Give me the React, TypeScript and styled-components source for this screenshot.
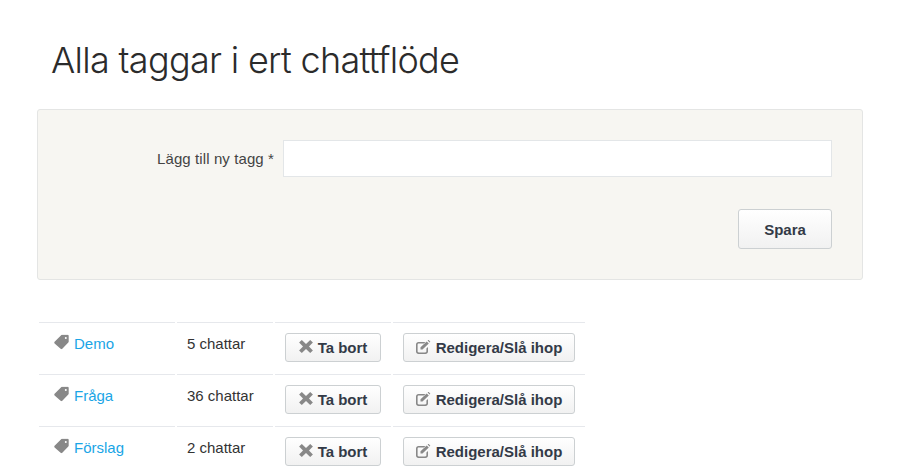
import React from "react";
import styled, { createGlobalStyle } from "styled-components";

const GlobalStyle = createGlobalStyle`
  html, body {
    margin: 0;
    padding: 0;
    background: #fff;
    overflow: hidden;
  }
  body {
    font-family: "Liberation Sans", Arial, sans-serif;
    font-size: 15px;
    color: #333;
  }
`;

const Page = styled.div`
  width: 897px;
  height: 473px;
  padding: 0 34px 0 37px;
  box-sizing: border-box;
  overflow: hidden;
`;

const Title = styled.h1`
  margin: 0;
  padding: 38px 0 0 14px;
  height: 109px;
  box-sizing: border-box;
  font-family: Inter, "Liberation Sans", sans-serif;
  font-size: 36px;
  line-height: 44px;
  font-weight: 300;
  letter-spacing: -0.68px;
  color: #2b2b2b;
`;

const Panel = styled.form`
  height: 171px;
  box-sizing: border-box;
  background: #f7f6f2;
  border: 1px solid #e4e5e4;
  border-radius: 3px;
  padding: 30px 30px 0 0;
`;

const FieldRow = styled.div`
  display: flex;
  align-items: center;
  justify-content: flex-end;
  gap: 9px;
`;

const FieldLabel = styled.label`
  font-size: 15px;
  letter-spacing: 0.1px;
  color: #444;
`;

const TextInput = styled.input`
  width: 549px;
  height: 37px;
  box-sizing: border-box;
  background: #fff;
  border: 1px solid #e3e6e8;
  outline: none;
`;

const FormActions = styled.div`
  display: flex;
  justify-content: flex-end;
  margin-top: 32px;
`;

const Button = styled.button<{ $large?: boolean }>`
  display: inline-flex;
  align-items: center;
  justify-content: center;
  gap: 5px;
  box-sizing: border-box;
  height: ${({ $large }) => ($large ? "40px" : "29px")};
  padding: 0;
  width: ${({ $large }) => ($large ? "94px" : "auto")};
  font-family: "Liberation Sans", Arial, sans-serif;
  font-size: 15px;
  font-weight: 700;
  color: #333a47;
  background: linear-gradient(#ffffff, #f1f1f1);
  border: 1px solid #ccd0d2;
  border-radius: 3px;
`;

const TagTable = styled.table`
  margin-top: 40px;
  border-collapse: separate;
  border-spacing: 2px;
`;

const Cell = styled.td<{ $width: number; $pad: number }>`
  width: ${({ $width }) => $width}px;
  height: 50px;
  box-sizing: border-box;
  padding: 0 0 0 ${({ $pad }) => $pad}px;
  border-top: 1px solid #e6e8ec;
  vertical-align: top;
`;

const NameWrap = styled.div`
  display: flex;
  align-items: center;
  gap: 5px;
  margin-top: 12px;
  font-size: 15px;
`;

const CountText = styled.div`
  margin-top: 12px;
  font-size: 15px;
  color: #333;
`;

const TagLink = styled.a`
  color: #1aa5e6;
  text-decoration: none;
`;

const Icon = styled.svg`
  flex: none;
  fill: #888;
`;

const TagSvg = styled(Icon)`
  transform: translateY(-1.5px);
`;

const RaisedIcon = styled(Icon)`
  transform: translateY(-1px);
`;

const TagIcon = () => (
  <TagSvg width="15" height="15" viewBox="0 0 15 15">
    <path
      fillRule="evenodd"
      d="M8 .3h5.500c.7 0 1.200.5 1.200 1.200V7c0 .4-.1.7-.4 1l-6 6.300c-.5.5-1.200.5-1.700 0L.6 8.900c-.5-.5-.5-1.200 0-1.700l6.300-6.300c.3-.3.700-.6 1.100-.6zM11.800 2.500a1 1 0 1 0 0 2 1 1 0 0 0 0-2z"
    />
  </TagSvg>
);

const RemoveIcon = () => (
  <RaisedIcon width="14" height="13" viewBox="0 0 14 13">
    <path d="M2.800.1 7 3.900 11.200.1l2.700 2.500-3.900 3.900 3.900 3.900-2.700 2.500L7 9.100l-4.200 3.800L.1 10.400 4 6.500.1 2.600z" />
  </RaisedIcon>
);

const EditIcon = () => (
  <RaisedIcon width="15" height="14" viewBox="0 0 15 14">
    <path d="M2.500 2H9.500L7.900 3.600H2.800c-.7 0-1.200.5-1.200 1.200v6.400c0 .7.500 1.200 1.200 1.200h6.400c.7 0 1.200-.5 1.200-1.200V8.500L12 6.900v4.600c0 1.400-1.100 2.500-2.500 2.500h-7C1.100 14 0 12.900 0 11.500v-7C0 3.100 1.100 2 2.500 2z" />
    <path d="M4.500 7.300 10.700 1.400l2.100 2L6.500 9.500H4.500z" />
    <path d="M11.600.6 12.200 0c.2-.1.400-.1.500 0l1.400 1.400c.2.200.2.400 0 .6l-.6.500z" />
  </RaisedIcon>
);

const ActionWrap = styled.div`
  margin-top: 10px;
`;

const RemoveButton = styled(Button)`
  width: 96px;
`;

const EditButton = styled(Button)`
  width: 172px;
`;

const tags = [
  { name: "Demo", count: 5 },
  { name: "Fråga", count: 36 },
  { name: "Förslag", count: 2 },
];

export default function App() {
  return (
    <Page>
      <GlobalStyle />
      <Title>Alla taggar i ert chattflöde</Title>
      <Panel>
        <FieldRow>
          <FieldLabel>Lägg till ny tagg *</FieldLabel>
          <TextInput type="text" />
        </FieldRow>
        <FormActions>
          <Button $large type="button">Spara</Button>
        </FormActions>
      </Panel>
      <TagTable>
        <tbody>
          {tags.map((tag) => (
            <tr key={tag.name}>
              <Cell $width={136} $pad={15}>
                <NameWrap>
                  <TagIcon />
                  <TagLink href="#">{tag.name}</TagLink>
                </NameWrap>
              </Cell>
              <Cell $width={96} $pad={10}>
                <CountText>{tag.count} chattar</CountText>
              </Cell>
              <Cell $width={116} $pad={10}>
                <ActionWrap>
                  <RemoveButton type="button">
                    <RemoveIcon />
                    Ta bort
                  </RemoveButton>
                </ActionWrap>
              </Cell>
              <Cell $width={192} $pad={10}>
                <ActionWrap>
                  <EditButton type="button">
                    <EditIcon />
                    Redigera/Slå ihop
                  </EditButton>
                </ActionWrap>
              </Cell>
            </tr>
          ))}
        </tbody>
      </TagTable>
    </Page>
  );
}
